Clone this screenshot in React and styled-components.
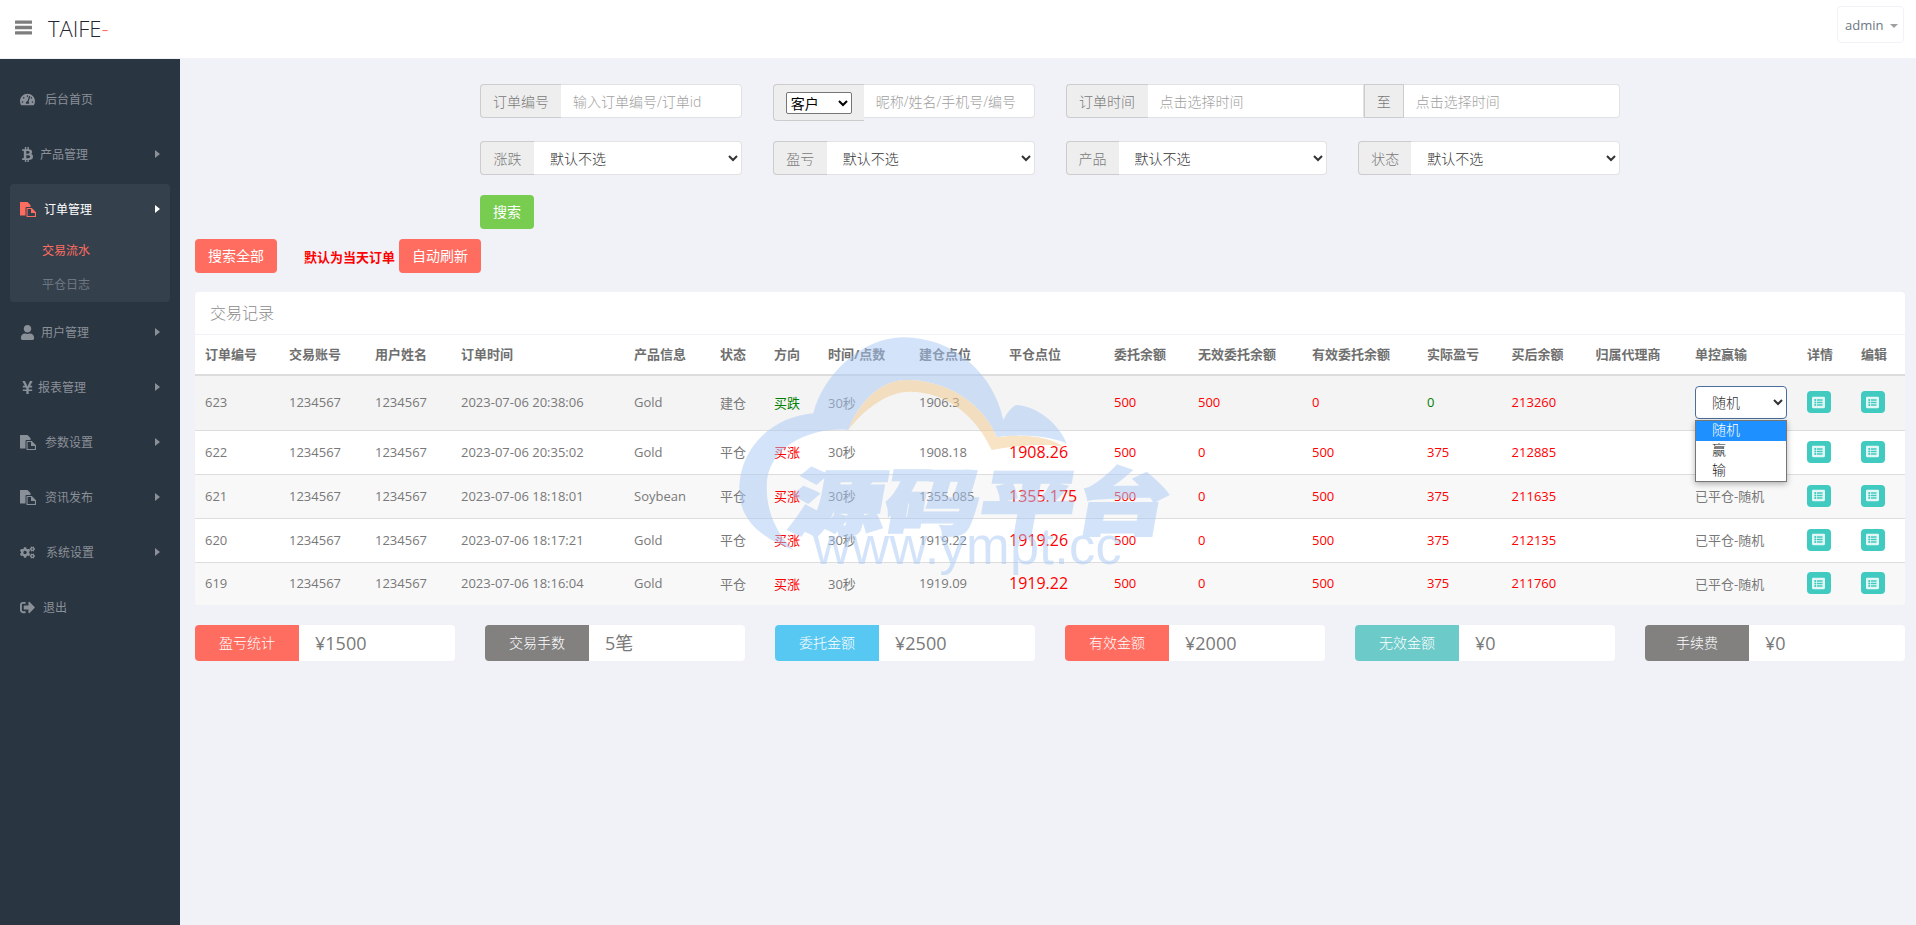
import React from 'react';
import styled, { createGlobalStyle } from 'styled-components';
import { FaTachometerAlt, FaBtc, FaUser, FaYenSign, FaCogs, FaSignOutAlt, FaListAlt } from 'react-icons/fa';

const FONT = '"Open Sans", "Noto Sans CJK SC", sans-serif';

const Global = createGlobalStyle`
  html, body { margin: 0; padding: 0; height: 100%; }
  body { background: #f1f2f7; font-family: ${FONT}; font-size: 13px; color: #797979; }
  * { box-sizing: border-box; }
  #root { height: 100%; }
`;

const Page = styled.div`
  display: flex;
  flex-direction: column;
  height: 100vh;
  overflow: hidden;
`;

const TopBar = styled.header`
  display: flex;
  align-items: center;
  height: 59px;
  flex: none;
  background: #fff;
  padding: 0 12px 3px 15px;
  border-bottom: 1px solid #f1f2f7;
`;

const Burger = styled.svg`
  flex: none;
  width: 17px;
  height: 15px;
  margin-right: 16px;
  fill: #7d7d7d;
`;

const Logo = styled.div`
  font-size: 22px;
  font-weight: 300;
  color: #1f2731;
  flex: 1;
  span { color: #ff6c60; }
`;

const UserButton = styled.div`
  display: flex;
  align-items: center;
  align-self: flex-start;
  width: 67px;
  height: 37px;
  padding-left: 7px;
  margin-top: 6px;
  border: 1px solid #eff2f7;
  border-radius: 4px;
  color: #6d7883;
  &::after {
    content: '';
    margin-left: 7px;
    margin-top: 2px;
    border-top: 4px solid #a0a0a0;
    border-left: 4px solid transparent;
    border-right: 4px solid transparent;
  }
`;

const Body = styled.div`
  display: flex;
  flex: 1;
  min-height: 0;
`;

const Sidebar = styled.nav`
  width: 180px;
  flex: none;
  background: #2a3542;
  padding: 15px 10px 0;
`;

const NavItem = styled.div`
  display: flex;
  align-items: center;
  height: 50px;
  padding: 0 10px;
  margin-bottom: 5px;
  font-size: 12px;
  color: ${p => (p.$active ? '#fff' : '#8a9097')};
`;

const ActiveBox = styled.div`
  background: #35404d;
  border-radius: 4px;
  margin-bottom: 5px;
  ${NavItem} { margin-bottom: 0; }
`;

const NavIcon = styled.span`
  display: flex;
  align-items: center;
  flex: none;
  width: ${p => p.$w}px;
  font-size: 15px;
  color: ${p => (p.$active ? '#ff6c60' : '#8a9097')};
`;

const NavLabel = styled.span`
  flex: 1;
`;

const Arrow = styled.i`
  width: 0;
  height: 0;
  border-left: 5px solid ${p => (p.$active ? '#fff' : '#8a9097')};
  border-top: 4.5px solid transparent;
  border-bottom: 4.5px solid transparent;
`;

const SubItem = styled.div`
  height: 34px;
  line-height: 34px;
  padding-left: 32px;
  font-size: 12px;
  color: ${p => (p.$active ? '#ff6c60' : '#6e7781')};
`;

const Main = styled.main`
  position: relative;
  flex: 1;
  min-width: 0;
  padding: 25px 11px 0 15px;
`;

const SearchGrid = styled.div`
  display: grid;
  grid-template-columns: repeat(4, 261.75px);
  grid-auto-rows: 34px;
  column-gap: 31px;
  row-gap: 23px;
  align-items: start;
  margin-left: 285px;
`;

const Group = styled.div`
  display: flex;
  align-items: flex-start;
  grid-column: span ${p => p.$span || 1};
`;

const Addon = styled.span`
  display: flex;
  align-items: center;
  justify-content: center;
  flex: none;
  height: ${p => p.$h || 34}px;
  width: ${p => p.$w}px;
  background: #eee;
  border: 1px solid #ccc;
  border-right: ${p => (p.$mid ? '1px solid #ccc' : 'none')};
  border-radius: ${p => (p.$mid ? '0' : '4px 0 0 4px')};
  font-size: 14px;
  font-weight: 300;
  color: #797979;
`;

const TextInput = styled.input`
  flex: 1;
  min-width: 0;
  height: 34px;
  padding: 0 12px;
  background: #fff;
  border: 1px solid #e2e2e4;
  border-left: none;
  border-radius: ${p => (p.$mid ? '0' : '0 4px 4px 0')};
  font: 300 14px ${FONT};
  &::placeholder { color: #a0a0a0; opacity: 1; }
`;

const FieldSelect = styled.select`
  flex: 1;
  min-width: 0;
  height: 34px;
  padding: 0 12px;
  background: #fff;
  color: #333;
  border: 1px solid #e2e2e4;
  border-left: none;
  border-radius: 0 4px 4px 0;
  font: 300 14px ${FONT};
`;

const TinySelect = styled.select`
  width: 66px;
  height: 22px;
  background: #fff;
  color: #000;
  font: 14px ${FONT};
  border: 1px solid #767676;
  border-radius: 2px;
`;

const Button = styled.button`
  height: 34px;
  padding: 0 13px 2px;
  border: none;
  border-radius: 4px;
  background: #ff6c60;
  color: #fff;
  font: 14px ${FONT};
`;

const SearchButton = styled(Button)`
  display: block;
  margin: 20px 0 0 285px;
  background: #78cd51;
`;

const ActionRow = styled.div`
  display: flex;
  align-items: center;
  margin-top: 10px;
`;

const Notice = styled.b`
  margin: 0 4px 0 27px;
  color: #f00;
  font-size: 13px;
`;

const Card = styled.section`
  margin-top: 19px;
  background: #fff;
  border-radius: 4px;
  overflow: hidden;
`;

const CardTitle = styled.div`
  height: 43px;
  padding: 0 15px;
  line-height: 42px;
  font-size: 16px;
  font-weight: 300;
  color: #8c8c8c;
  border-bottom: 1px solid #f1f2f7;
`;

const Table = styled.table`
  width: 100%;
  table-layout: fixed;
  border-collapse: separate;
  border-spacing: 0;
`;

const Th = styled.th`
  height: 41px;
  padding: 0 0 2px 10px;
  text-align: left;
  font-size: 13px;
  font-weight: 700;
  color: #6f6f6f;
  white-space: nowrap;
  border-bottom: 2px solid #ddd;
`;

const Tr = styled.tr`
  background: ${p => p.$bg};
`;

const Td = styled.td`
  height: ${p => p.$h}px;
  padding: 0 0 2px 10px;
  font-size: ${p => p.$size || 13}px;
  color: ${p => p.$color || '#797979'};
  white-space: nowrap;
  border-bottom: ${p => (p.$last ? 'none' : '1px solid #ddd')};
`;

const IconButton = styled.span`
  display: inline-flex;
  align-items: center;
  justify-content: center;
  vertical-align: middle;
  width: 24px;
  height: 22px;
  border-radius: 4px;
  background: #41cac0;
  color: rgba(255, 255, 255, 0.85);
  font-size: 13px;
`;

const ControlWrap = styled.div`
  position: relative;
  width: 92px;
`;

const ControlSelect = styled.select`
  display: block;
  width: 92px;
  height: 33px;
  padding: 0 12px;
  background: #fff;
  color: #333;
  border: 1px solid #4a6f9c;
  border-radius: 4px;
  font: 300 14px ${FONT};
`;

const Popup = styled.div`
  position: absolute;
  top: 34px;
  left: 0;
  z-index: 3;
  width: 92px;
  background: #fff;
  border: 1px solid #767676;
  box-shadow: 0 2px 6px rgba(0, 0, 0, 0.3);
`;

const PopupOption = styled.div`
  height: 20px;
  line-height: 18px;
  padding-left: 16px;
  font-size: 14px;
  font-weight: 300;
  background: ${p => (p.$on ? '#1e90ff' : '#fff')};
  color: ${p => (p.$on ? '#fff' : '#222')};
`;

const Stats = styled.div`
  display: grid;
  grid-template-columns: repeat(6, 1fr);
  column-gap: 30px;
  margin-top: 20px;
`;

const Stat = styled.div`
  display: flex;
  height: 36px;
  background: #fff;
  border-radius: 4px;
  overflow: hidden;
`;

const StatLabel = styled.div`
  flex: none;
  width: 104px;
  line-height: 36px;
  text-align: center;
  font-size: 14px;
  font-weight: 300;
  color: #fff;
  background: ${p => p.$bg};
`;

const StatValue = styled.div`
  padding-left: 16px;
  line-height: 36px;
  font-size: 18px;
  color: #797979;
`;

const Watermark = styled.svg`
  position: absolute;
  left: 550px;
  top: 271px;
  width: 460px;
  height: 260px;
  opacity: 0.5;
  pointer-events: none;
  z-index: 2;
`;

const Files = () => (
  <svg width="16" height="15" viewBox="0 0 16 15" fill="currentColor">
    <path d="M0 .5A.5.5 0 0 1 .5 0H7.5L10.5 3V5H6.5Q5.5 5 5.5 6V13.5H.5A.5.5 0 0 1 0 13z" />
    <path fillRule="evenodd" d="M7 6H11.8L16 10.2V14.5a.5.5 0 0 1-.5.5H7a.5.5 0 0 1-.5-.5V6.5A.5.5 0 0 1 7 6zM7.6 7.1V13.9H14.9V11H11V7.1z" />
  </svg>
);

const nav1 = [
  { icon: <FaTachometerAlt />, w: 25, label: '后台首页' },
  { icon: <FaBtc />, w: 20, label: '产品管理', arrow: true },
];
const nav2 = [
  { icon: <FaUser />, w: 21, label: '用户管理', arrow: true },
  { icon: <FaYenSign />, w: 18, label: '报表管理', arrow: true },
  { icon: <Files />, w: 25, label: '参数设置', arrow: true },
  { icon: <Files />, w: 25, label: '资讯发布', arrow: true },
  { icon: <FaCogs />, w: 26, label: '系统设置', arrow: true },
  { icon: <FaSignOutAlt />, w: 23, label: '退出' },
];

const widths = [84, 86, 86, 173, 86, 54, 54, 91, 90, 105, 84, 114, 115, 84.6, 84, 99.4, 112, 54, 54];
const heads = ['订单编号', '交易账号', '用户姓名', '订单时间', '产品信息', '状态', '方向', '时间/点数', '建仓点位', '平仓点位', '委托余额', '无效委托余额', '有效委托余额', '实际盈亏', '买后余额', '归属代理商', '单控赢输', '详情', '编辑'];

const RED = '#f00';
const GREEN = '#008000';

const rows = [
  { id: '623', time: '2023-07-06 20:38:06', prod: 'Gold', state: '建仓', dir: '买跌', dirC: GREEN, open: '1906.3', close: '', inv: '500', eff: '0', pnl: '0', pnlC: GREEN, bal: '213260', h: 55, bg: '#f4f4f4', control: true },
  { id: '622', time: '2023-07-06 20:35:02', prod: 'Gold', state: '平仓', dir: '买涨', dirC: RED, open: '1908.18', close: '1908.26', inv: '0', eff: '500', pnl: '375', pnlC: RED, bal: '212885', h: 44, bg: '#fff' },
  { id: '621', time: '2023-07-06 18:18:01', prod: 'Soybean', state: '平仓', dir: '买涨', dirC: RED, open: '1355.085', close: '1355.175', inv: '0', eff: '500', pnl: '375', pnlC: RED, bal: '211635', h: 44, bg: '#f8f8f8' },
  { id: '620', time: '2023-07-06 18:17:21', prod: 'Gold', state: '平仓', dir: '买涨', dirC: RED, open: '1919.22', close: '1919.26', inv: '0', eff: '500', pnl: '375', pnlC: RED, bal: '212135', h: 44, bg: '#fff' },
  { id: '619', time: '2023-07-06 18:16:04', prod: 'Gold', state: '平仓', dir: '买涨', dirC: RED, open: '1919.09', close: '1919.22', inv: '0', eff: '500', pnl: '375', pnlC: RED, bal: '211760', h: 42, bg: '#f8f8f8', last: true },
];

const stats = [
  ['盈亏统计', '¥1500', '#ff6c60'],
  ['交易手数', '5笔', '#828180'],
  ['委托金额', '¥2500', '#57c8f2'],
  ['有效金额', '¥2000', '#ff6c60'],
  ['无效金额', '¥0', '#6ccac9'],
  ['手续费', '¥0', '#828180'],
];

const NavRow = ({ item }) => (
  <NavItem>
    <NavIcon $w={item.w}>{item.icon}</NavIcon>
    <NavLabel>{item.label}</NavLabel>
    {item.arrow && <Arrow />}
  </NavItem>
);

const Choice = ({ label, w }) => (
  <Group>
    <Addon $w={w}>{label}</Addon>
    <FieldSelect defaultValue="">
      <option value="">默认不选</option>
    </FieldSelect>
  </Group>
);

export default function App() {
  return (
    <Page lang="zh-CN">
      <Global />
      <TopBar>
        <Burger viewBox="0 0 17 15">
          <rect width="17" height="3.4" y="0.4" rx="0.5" />
          <rect width="17" height="3.4" y="5.8" rx="0.5" />
          <rect width="17" height="3.4" y="11.2" rx="0.5" />
        </Burger>
        <Logo>TAIFE<span>-</span></Logo>
        <UserButton>admin</UserButton>
      </TopBar>
      <Body>
        <Sidebar>
          {nav1.map(n => <NavRow key={n.label} item={n} />)}
          <ActiveBox>
            <NavItem $active>
              <NavIcon $w={24} $active><Files /></NavIcon>
              <NavLabel>订单管理</NavLabel>
              <Arrow $active />
            </NavItem>
            <SubItem $active>交易流水</SubItem>
            <SubItem>平仓日志</SubItem>
          </ActiveBox>
          {nav2.map(n => <NavRow key={n.label} item={n} />)}
        </Sidebar>
        <Main>
          <SearchGrid>
            <Group>
              <Addon $w={81}>订单编号</Addon>
              <TextInput placeholder="输入订单编号/订单id" />
            </Group>
            <Group>
              <Addon $w={91} $h={37}>
                <TinySelect defaultValue="客户"><option>客户</option></TinySelect>
              </Addon>
              <TextInput placeholder="昵称/姓名/手机号/编号" />
            </Group>
            <Group $span={2}>
              <Addon $w={82}>订单时间</Addon>
              <TextInput $mid placeholder="点击选择时间" />
              <Addon $w={40} $mid>至</Addon>
              <TextInput placeholder="点击选择时间" />
            </Group>
            <Choice label="涨跌" w={54} />
            <Choice label="盈亏" w={54} />
            <Choice label="产品" w={53} />
            <Choice label="状态" w={53} />
          </SearchGrid>
          <SearchButton>搜索</SearchButton>
          <ActionRow>
            <Button>搜索全部</Button>
            <Notice>默认为当天订单</Notice>
            <Button>自动刷新</Button>
          </ActionRow>
          <Card>
            <CardTitle>交易记录</CardTitle>
            <Table>
              <colgroup>
                {widths.map((w, i) => <col key={i} width={w} />)}
              </colgroup>
              <thead>
                <tr>{heads.map(h => <Th key={h}>{h}</Th>)}</tr>
              </thead>
              <tbody>
                {rows.map(r => {
                  const cell = { $h: r.h, $last: r.last };
                  return (
                    <Tr key={r.id} $bg={r.bg}>
                      <Td {...cell}>{r.id}</Td>
                      <Td {...cell}>1234567</Td>
                      <Td {...cell}>1234567</Td>
                      <Td {...cell}>{r.time}</Td>
                      <Td {...cell}>{r.prod}</Td>
                      <Td {...cell}>{r.state}</Td>
                      <Td {...cell} $color={r.dirC}>{r.dir}</Td>
                      <Td {...cell}>30秒</Td>
                      <Td {...cell}>{r.open}</Td>
                      <Td {...cell} $color={RED} $size={16}>{r.close}</Td>
                      <Td {...cell} $color={RED}>500</Td>
                      <Td {...cell} $color={RED}>{r.inv}</Td>
                      <Td {...cell} $color={RED}>{r.eff}</Td>
                      <Td {...cell} $color={r.pnlC}>{r.pnl}</Td>
                      <Td {...cell} $color={RED}>{r.bal}</Td>
                      <Td {...cell} />
                      <Td {...cell}>
                        {r.control ? (
                          <ControlWrap>
                            <ControlSelect defaultValue="随机">
                              <option>随机</option>
                              <option>赢</option>
                              <option>输</option>
                            </ControlSelect>
                            <Popup>
                              <PopupOption $on>随机</PopupOption>
                              <PopupOption>赢</PopupOption>
                              <PopupOption>输</PopupOption>
                            </Popup>
                          </ControlWrap>
                        ) : '已平仓-随机'}
                      </Td>
                      <Td {...cell}><IconButton><FaListAlt /></IconButton></Td>
                      <Td {...cell}><IconButton><FaListAlt /></IconButton></Td>
                    </Tr>
                  );
                })}
              </tbody>
            </Table>
          </Card>
          <Stats>
            {stats.map(([l, v, c]) => (
              <Stat key={l}>
                <StatLabel $bg={c}>{l}</StatLabel>
                <StatValue>{v}</StatValue>
              </Stat>
            ))}
          </Stats>
          <Watermark viewBox="0 0 1380 780">
            <path fill="#a8c8f5" d="M190 660C110 630 28 580 28 480C28 350 130 260 250 250C280 130 400 22 520 22C670 22 790 130 820 270C830 250 850 225 860 225C930 230 990 290 1010 340C960 320 880 310 800 322C760 220 650 150 530 150C450 150 385 220 355 300C260 290 110 340 110 470C110 560 150 620 190 660Z" />
            <path fill="#f2c98a" d="M355 300C385 220 450 150 530 150C650 150 760 220 800 322C880 310 960 320 1000 350C950 340 870 345 785 360C740 260 650 185 540 185C470 185 400 240 355 300Z" />
            <text x="274" y="597" fill="#a8c8f5" stroke="#a8c8f5" strokeWidth="8" fontFamily='"Noto Sans CJK SC", sans-serif' fontWeight="900" fontSize="215" textLength="1140" lengthAdjust="spacingAndGlyphs" transform="skewX(-10)">源码平台</text>
            <text x="250" y="702" fill="#a8c8f5" fontFamily='"Liberation Sans", sans-serif' fontSize="157" textLength="925">www.ympt.cc</text>
          </Watermark>
        </Main>
      </Body>
    </Page>
  );
}
